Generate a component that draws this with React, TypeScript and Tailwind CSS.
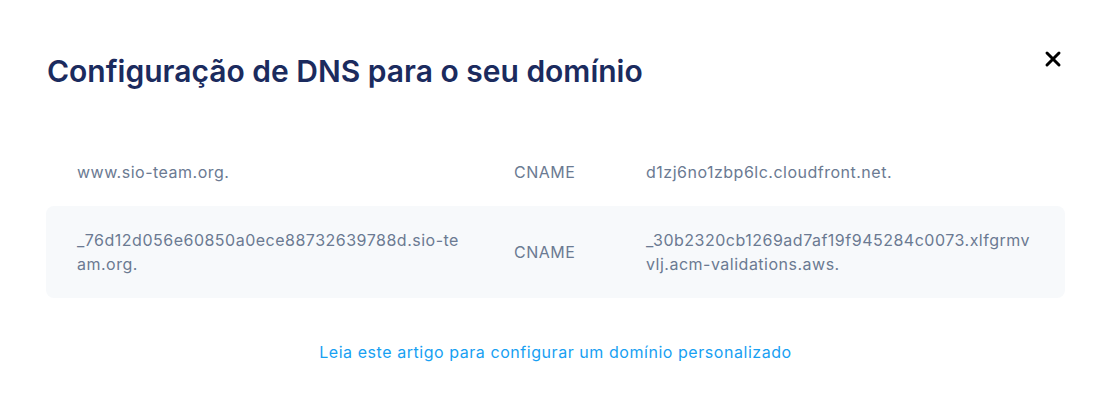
import { X } from 'lucide-react'

interface DnsRecord {
  name: string
  type: string
  value: string
}

const records: DnsRecord[] = [
  {
    name: 'www.sio-team.org.',
    type: 'CNAME',
    value: 'd1zj6no1zbp6lc.cloudfront.net.',
  },
  {
    name: '_76d12d056e60850a0ece88732639788d.sio-team.org.',
    type: 'CNAME',
    value: '_30b2320cb1269ad7af19f945284c0073.xlfgrmvvlj.acm-validations.aws.',
  },
]

const DnsRow = ({ record, striped }: { record: DnsRecord; striped: boolean }) => (
  <div
    className={`grid grid-cols-[468px_132px_1fr] items-center rounded-lg py-[22px] text-[16px] leading-6 tracking-[0.5px] text-[#6b7a92] ${
      striped ? 'bg-[#f7f9fb]' : 'bg-white'
    }`}
  >
    <div className="break-all pl-[31px] pr-[49px]">{record.name}</div>
    <div>{record.type}</div>
    <div className="break-all pr-[30px]">{record.value}</div>
  </div>
)

const App = () => {
  return (
    <div className="min-h-screen w-full bg-white font-['Inter',sans-serif]">
      <div className="px-[46px] pt-[51px]">
        <div className="flex items-start justify-between">
          <h2 className="ml-px text-[30px] font-semibold leading-[40px] text-[#1b2b5e]">
            Configuração de DNS para o seu domínio
          </h2>
          <button className="-mt-[4px] flex h-6 w-6 items-center justify-center text-black">
            <X size={24} strokeWidth={3} />
          </button>
        </div>

        <div className="mt-[47px] flex flex-col">
          {records.map((record, i) => (
            <DnsRow key={record.name} record={record} striped={i % 2 === 1} />
          ))}
        </div>

        <p className="mt-[42px] text-center text-[16px] leading-6 tracking-[0.55px] text-[#17a0f2]">
          <a href="#">Leia este artigo para configurar um domínio personalizado</a>
        </p>
      </div>
    </div>
  )
}

export default App
